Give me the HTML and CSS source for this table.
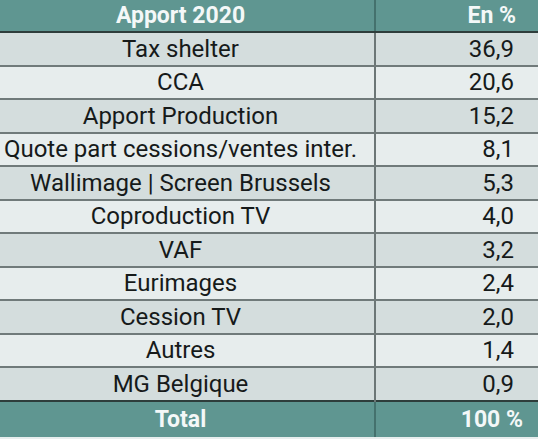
FILE: index.html
```html
<!DOCTYPE html>
<html lang="fr">
<head>
    <meta charset="UTF-8">
    <meta name="viewport" content="width=device-width, initial-scale=1.0">
    <title>Apport 2020</title>
    <link rel="stylesheet" href="styles.css">
</head>
<body>

    <!-- Tableau des apports -->
    <table class="apport-table">
        <thead>
            <tr>
                <th class="col-label">Apport 2020</th>
                <th class="col-value head-value">En %</th>
            </tr>
        </thead>
        <tbody>
            <tr><td class="col-label">Tax shelter</td><td class="col-value">36,9</td></tr>
            <tr><td class="col-label">CCA</td><td class="col-value">20,6</td></tr>
            <tr><td class="col-label">Apport Production</td><td class="col-value">15,2</td></tr>
            <tr><td class="col-label">Quote part cessions/ventes inter.</td><td class="col-value">8,1</td></tr>
            <tr><td class="col-label">Wallimage | Screen Brussels</td><td class="col-value">5,3</td></tr>
            <tr><td class="col-label">Coproduction TV</td><td class="col-value">4,0</td></tr>
            <tr><td class="col-label">VAF</td><td class="col-value">3,2</td></tr>
            <tr><td class="col-label">Eurimages</td><td class="col-value">2,4</td></tr>
            <tr><td class="col-label">Cession TV</td><td class="col-value">2,0</td></tr>
            <tr><td class="col-label">Autres</td><td class="col-value">1,4</td></tr>
            <tr><td class="col-label">MG Belgique</td><td class="col-value">0,9</td></tr>
        </tbody>
        <tfoot>
            <tr>
                <td class="col-label">Total</td>
                <td class="col-value total-value">100 %</td>
            </tr>
        </tfoot>
    </table>

</body>
</html>
```

FILE: styles.css
```css
body {
    font-family: Roboto, "Liberation Sans", Arial, sans-serif;
    background-color: #e8eeee;
    margin: 0;
    padding: 0;
    width: 538px;
    height: 439px;
    overflow: hidden;
}

.apport-table {
    width: 538px;
    border-collapse: collapse;
    table-layout: fixed;
    font-size: 24px;
    color: #161a1a;
}

.apport-table td,
.apport-table th {
    padding: 0;
    line-height: 1;
    white-space: nowrap;
}

.col-label {
    width: 361px;
    text-align: center;
    padding-right: 13px !important;
    border-right: 2px solid #6c7676;
}

.col-value {
    text-align: right;
    padding-right: 24px !important;
}

/* En-tête et total */
thead th,
tfoot td {
    background-color: #5f9691;
    color: #f4f8f8;
    font-weight: bold;
    font-size: 23px;
}

thead th {
    height: 31px;
    border-bottom: 2px solid #2e3d3b;
}

thead .col-label,
tfoot .col-label {
    border-right-color: #44716d;
}

.head-value {
    padding-right: 22px !important;
}

tfoot td {
    height: 35px;
    border-top: 2px solid #2e3d3b;
}

.total-value {
    padding-right: 15px !important;
}

/* Lignes du corps */
tbody td {
    height: 31.5px;
    border-bottom: 2px solid #707a7a;
}

tbody tr:nth-child(odd) td {
    background-color: #d4dddd;
}

tbody tr:nth-child(even) td {
    background-color: #e7eded;
}

tbody tr:last-child td {
    border-bottom: none;
}
```
